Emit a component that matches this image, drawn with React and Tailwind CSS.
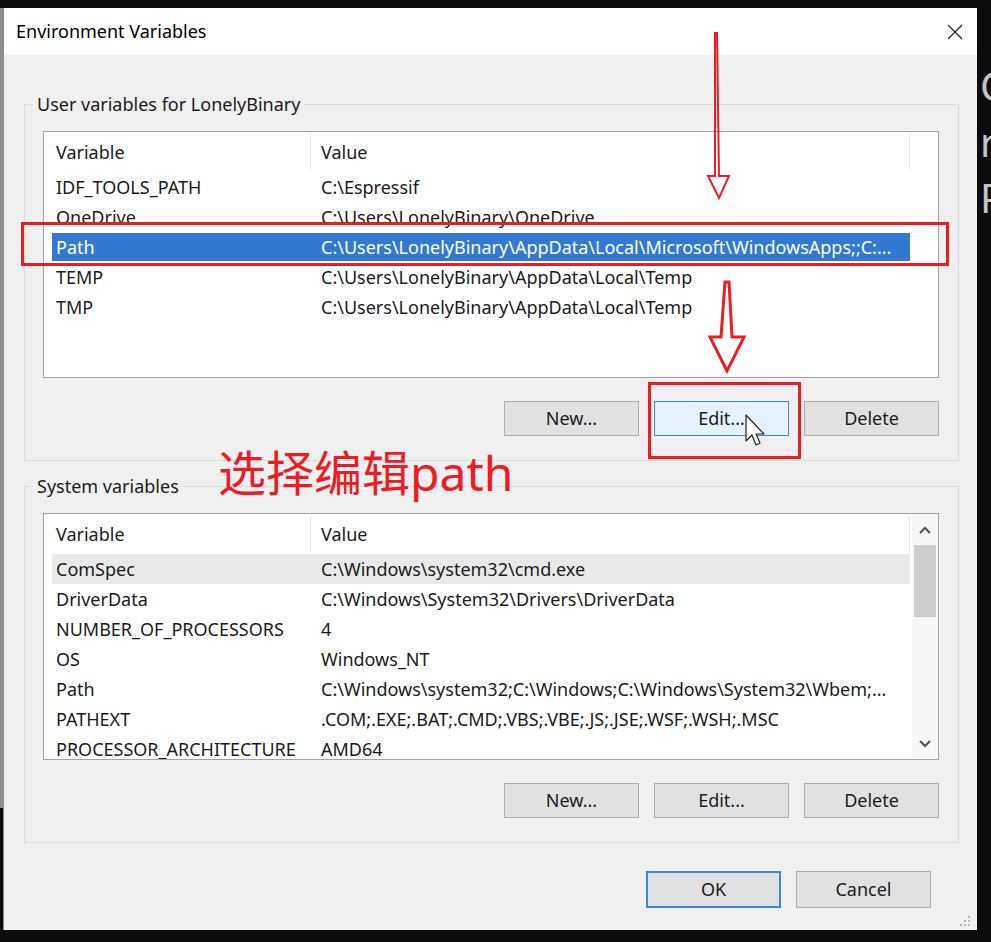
import React from "react";

const userVars = [
  ["IDF_TOOLS_PATH", "C:\\Espressif"],
  ["OneDrive", "C:\\Users\\LonelyBinary\\OneDrive"],
  ["Path", "C:\\Users\\LonelyBinary\\AppData\\Local\\Microsoft\\WindowsApps;;C:..."],
  ["TEMP", "C:\\Users\\LonelyBinary\\AppData\\Local\\Temp"],
  ["TMP", "C:\\Users\\LonelyBinary\\AppData\\Local\\Temp"],
];

const systemVars = [
  ["ComSpec", "C:\\Windows\\system32\\cmd.exe"],
  ["DriverData", "C:\\Windows\\System32\\Drivers\\DriverData"],
  ["NUMBER_OF_PROCESSORS", "4"],
  ["OS", "Windows_NT"],
  ["Path", "C:\\Windows\\system32;C:\\Windows;C:\\Windows\\System32\\Wbem;..."],
  ["PATHEXT", ".COM;.EXE;.BAT;.CMD;.VBS;.VBE;.JS;.JSE;.WSF;.WSH;.MSC"],
  ["PROCESSOR_ARCHITECTURE", "AMD64"],
];

function Header() {
  return (
    <div className="flex h-[40px] shrink-0 items-center ml-[8px] w-[858px]">
      <div className="w-[259px] h-[36px] pl-[4px] flex items-center border-r border-[#e5e5e5]">Variable</div>
      <div className="flex-1 h-[36px] pl-[10px] flex items-center border-r border-[#e5e5e5]">Value</div>
    </div>
  );
}

function Row({ name, value, selected, hover }) {
  let cls = "h-[30px]";
  if (selected) cls = "h-[28px] my-[1px] bg-[#3379d3] text-white";
  if (hover) cls = "h-[30px] bg-[#e9e9e9]";
  return (
    <div className={`flex shrink-0 items-center ml-[8px] w-[858px] ${cls}`}>
      <div className="w-[259px] pl-[4px] whitespace-nowrap overflow-hidden">{name}</div>
      <div className="w-[599px] pl-[10px] whitespace-nowrap overflow-hidden">{value}</div>
    </div>
  );
}

function Button({ children, active }) {
  return (
    <div
      className={`w-[135px] h-[35px] flex items-center justify-center border ${
        active ? "bg-[#e5f1fb] border-[#3c87d2]" : "bg-[#e1e1e1] border-[#adadad]"
      }`}
    >
      {children}
    </div>
  );
}

function Chevron({ up }) {
  return (
    <svg width="12" height="8" viewBox="0 0 12 8">
      <polyline
        points={up ? "1,7 6,2 11,7" : "1,1 6,6 11,1"}
        fill="none"
        stroke="#505050"
        strokeWidth="2"
      />
    </svg>
  );
}

function GroupBox({ label, children }) {
  return (
    <fieldset className="w-[935px] border border-[#dcdcdc] px-0">
      <legend className="ml-[8px] px-[4px] leading-[24px]">{label}</legend>
      <div className="px-[18px] pt-[15px] pb-[24px]">{children}</div>
    </fieldset>
  );
}

export default function App() {
  return (
    <div className="relative w-[991px] h-[942px] overflow-hidden bg-[#0c0c0c] flex pt-[8px] font-['Noto_Sans','Noto_Sans_CJK_SC',sans-serif] text-[18px] text-[#1b1b1b]">
      {/* window behind, left edge */}
      <div className="w-[3px] h-[800px] shrink-0 bg-[#8e8e8e]" />

      {/* dialog */}
      <div className="relative w-[974px] h-[922px] shrink-0 border-l border-[#8a8a8a] flex flex-col">
        <div className="h-[47px] bg-white flex items-center justify-between pl-[12px] pr-[14px]">
          <span className="text-black">Environment Variables</span>
          <svg width="16" height="16" viewBox="0 0 16 16">
            <path d="M1 1 L15 15 M15 1 L1 15" stroke="#2a2a2a" strokeWidth="1.4" />
          </svg>
        </div>

        <div className="flex-1 bg-[#f0f0f0] pl-[20px] pt-[37px] flex flex-col">
          <GroupBox label="User variables for LonelyBinary">
            <div className="w-[896px] h-[247px] border border-[#a3a3a3] bg-white flex flex-col overflow-hidden">
              <Header />
              {userVars.map(([n, v]) => (
                <Row key={n} name={n} value={v} selected={n === "Path"} />
              ))}
            </div>
            <div className="mt-[23px] flex justify-end gap-[15px] w-[896px]">
              <Button>New...</Button>
              <Button active>Edit...</Button>
              <Button>Delete</Button>
            </div>
          </GroupBox>

          <div className="mt-[13px]">
            <GroupBox label="System variables">
              <div className="w-[896px] h-[247px] border border-[#a3a3a3] bg-white flex overflow-hidden">
                <div className="w-[868px] flex flex-col overflow-hidden">
                  <Header />
                  {systemVars.map(([n, v], i) => (
                    <Row key={n + i} name={n} value={v} hover={i === 0} />
                  ))}
                </div>
                <div className="w-[26px] bg-[#f7f7f7] flex flex-col">
                  <div className="h-[31px] flex items-center justify-center">
                    <Chevron up />
                  </div>
                  <div className="h-[72px] mx-[2px] bg-[#cdcdcd]" />
                  <div className="flex-1" />
                  <div className="h-[30px] flex items-center justify-center">
                    <Chevron />
                  </div>
                </div>
              </div>
              <div className="mt-[23px] flex justify-end gap-[15px] w-[896px]">
                <Button>New...</Button>
                <Button>Edit...</Button>
                <Button>Delete</Button>
              </div>
            </GroupBox>
          </div>

          <div className="mt-[28px] w-[935px] pr-[28px] flex justify-end gap-[15px]">
            <div className="w-[135px] h-[37px] flex items-center justify-center bg-[#e1e1e1] border-2 border-[#3d86d8]">OK</div>
            <div className="w-[135px] h-[37px] flex items-center justify-center bg-[#e1e1e1] border border-[#adadad]">Cancel</div>
          </div>
        </div>

        {/* resize grip */}
        <svg className="absolute right-[6px] bottom-[3px]" width="12" height="12" viewBox="0 0 12 12">
          <g fill="#b5b5b5">
            <rect x="9" y="1" width="2" height="2" />
            <rect x="5" y="5" width="2" height="2" />
            <rect x="9" y="5" width="2" height="2" />
            <rect x="1" y="9" width="2" height="2" />
            <rect x="5" y="9" width="2" height="2" />
            <rect x="9" y="9" width="2" height="2" />
          </g>
        </svg>
      </div>

      {/* window behind, right edge */}
      <div className="flex-1 min-w-0 overflow-hidden pt-[50px] pl-[3px] flex flex-col text-[40px] leading-[56px] text-[#c4c4c4] whitespace-nowrap">
        <span>C</span>
        <span>r</span>
        <span>P</span>
      </div>

      {/* annotations */}
      <div className="absolute left-[21px] top-[222px] w-[928px] h-[44px] border-[3px] border-[#ed1c24]" />
      <div className="absolute left-[648px] top-[382px] w-[153px] h-[77px] border-[3px] border-[#ed1c24]" />
      <svg className="absolute left-0 top-0 pointer-events-none" width="991" height="942" viewBox="0 0 991 942">
        <polygon
          points="715,33 717,33 719,176 729,176 719,198 708,176 715,176"
          fill="none"
          stroke="#ed1c24"
          strokeWidth="2"
          strokeLinejoin="miter"
        />
        <polygon
          points="725,282 729,282 732,337 744,337 727,371 710,337 721,337"
          fill="none"
          stroke="#ed1c24"
          strokeWidth="3"
        />
        {/* mouse cursor */}
        <path
          d="M746 415 L746 441 L752 435 L756 445 L760 443 L756 434 L764 434 Z"
          fill="white"
          stroke="#222"
          strokeWidth="1.2"
          strokeLinejoin="round"
        />
      </svg>
      <div className="absolute left-[218px] top-[449px] text-[48px] leading-none text-[#ed1c24] font-['Noto_Sans','Noto_Sans_CJK_SC',sans-serif] whitespace-nowrap">
        选择编辑path
      </div>
    </div>
  );
}
